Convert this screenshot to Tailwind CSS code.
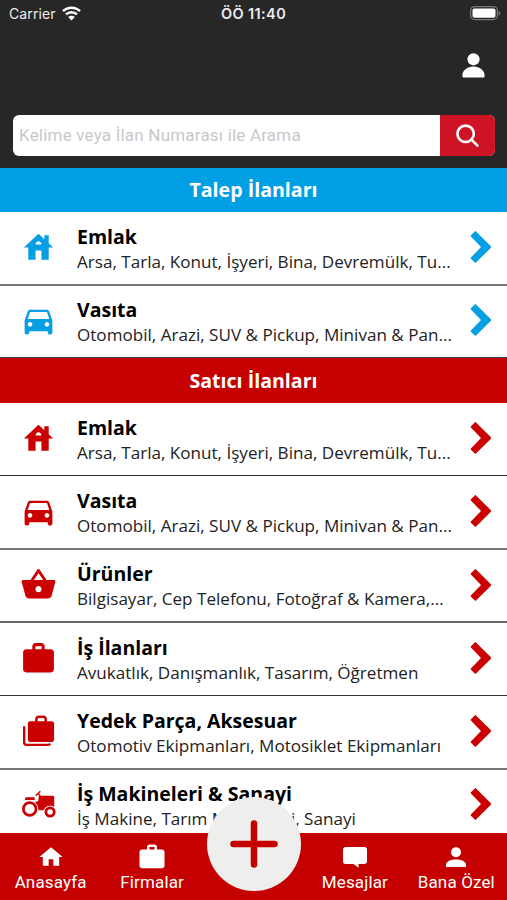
<!DOCTYPE html>
<html lang="tr">
<head>
    <meta charset="UTF-8" />
    <meta name="viewport" content="width=device-width, initial-scale=1.0" />
    <title>Anasayfa</title>
    <script src="https://cdn.jsdelivr.net/npm/@tailwindcss/browser@4"></script>
</head>
<body class="bg-white font-['Open_Sans',sans-serif] text-black">
    <!-- icon sprite -->
    <svg class="hidden">
        <symbol id="house" viewBox="0 0 24 24" preserveAspectRatio="none"><path d="M19 9.3V4h-3v2.6L12 3 2 12h3v8h5v-6h4v6h5v-8h3l-3-2.7zm-9 .7c0-1.1.9-2 2-2s2 .9 2 2h-4z"/></symbol>
        <symbol id="car" viewBox="0 0 24 24"><path d="M18.92 6.01C18.72 5.42 18.16 5 17.5 5h-11c-.66 0-1.21.42-1.42 1.01L3 12v8c0 .55.45 1 1 1h1c.55 0 1-.45 1-1v-1h12v1c0 .55.45 1 1 1h1c.55 0 1-.45 1-1v-8l-2.08-5.99zM6.5 16c-.83 0-1.5-.67-1.5-1.5S5.67 13 6.5 13s1.5.67 1.5 1.5S7.33 16 6.5 16zm11 0c-.83 0-1.5-.67-1.5-1.5s.67-1.5 1.5-1.5 1.5.67 1.5 1.5-.67 1.5-1.5 1.5zM5 11l1.5-4.5h11L19 11H5z"/></symbol>
        <symbol id="basket" viewBox="0 0 24 24"><path d="M17.21 9l-4.38-6.56c-.19-.28-.51-.42-.83-.42-.32 0-.64.14-.83.43L6.79 9H2c-.55 0-1 .45-1 1 0 .09.01.18.04.27l2.54 9.27c.23.84 1 1.46 1.92 1.46h13c.92 0 1.69-.62 1.93-1.46l2.54-9.27L23 10c0-.55-.45-1-1-1h-4.79zM9 9l3-4.4L15 9H9zm3 8c-1.1 0-2-.9-2-2s.9-2 2-2 2 .9 2 2-.9 2-2 2z"/></symbol>
        <symbol id="work" viewBox="0 0 24 24"><path d="M20 6h-4V4c0-1.11-.89-2-2-2h-4c-1.11 0-2 .89-2 2v2H4c-1.11 0-1.99.89-1.99 2L2 19c0 1.11.89 2 2 2h16c1.11 0 2-.89 2-2V8c0-1.11-.89-2-2-2zm-6 0h-4V4h4v2z"/></symbol>
        <symbol id="bags" viewBox="0 0 24 24">
            <path d="M2.700 8.600v10.600c0 1 .6 1.500 1.500 1.500h13.500c.9 0 1.500-.3 1.900-.9" fill="none" stroke="currentColor" stroke-width="1.500"/>
            <path d="M20.500 5.400h-3V4.200c0-1.400-1-2.500-2.400-2.500h-2.800c-1.400 0-2.500 1.100-2.500 2.500v1.200H6.600c-.9 0-1.500.6-1.500 1.500v10.300c0 .9.6 1.600 1.500 1.600h13.900c.9 0 1.600-.7 1.600-1.600V6.900c0-.9-.7-1.500-1.600-1.500zm-4.600 0h-4.500V4.400c0-.7.4-1.100 1-1.100h2.500c.6 0 1 .4 1 1.100v1z"/>
        </symbol>
        <symbol id="tractor" viewBox="0 0 24 24">
            <path d="M4 6.700h5.500v1.700H3.200c0-1 .3-1.700.8-1.700z"/>
            <circle cx="6.300" cy="14.300" r="4.100" fill="none" stroke="currentColor" stroke-width="1.800"/>
            <circle cx="19.500" cy="16.200" r="2.700" fill="none" stroke="currentColor" stroke-width="1.800"/>
            <path d="M10.200 5.700l3-3M11.800 4.100l1.600 2.200" fill="none" stroke="currentColor" stroke-width=".9"/>
            <path d="M12.200 5.700h9c.6 0 1 .4 1 1v6.200c-.8-.6-1.700-.8-2.700-.8-2 0-3.500 1.200-4.200 3h-3.400c.1-2.300-.8-4-2.300-5.200L11.900 9z"/>
        </symbol>
        <symbol id="chevron" viewBox="0 0 22 34"><path d="M6 1.400L20.700 16.100c.5.500.5 1.300 0 1.800L6 32.600c-.4.400-.8.400-1.200 0L.9 28.800c-.4-.4-.4-.8 0-1.200L11 17 .9 6.400c-.4-.4-.4-.8 0-1.200l3.900-3.800c.4-.4.8-.4 1.200 0z"/></symbol>
    </svg>

    <div class="relative flex h-[900px] w-[507px] flex-col overflow-hidden">
        <header class="h-[168px] shrink-0 bg-[#272727] text-white">
            <div class="flex h-[27px] items-center font-['Inter',sans-serif] text-[#ececec]">
                <div class="flex flex-1 items-center gap-[6px] pl-[9px]">
                    <span class="text-[14px] tracking-[0.1px]">Carrier</span>
                    <svg class="h-[15px] w-[19px]" viewBox="0 0 19 15" fill="none" stroke="#fff" stroke-width="2.500">
                        <path d="M1 5.200c4.700-4.700 12.300-4.700 17 0M4 8.400c3-3 8-3 11 0"/>
                        <path d="M6.200 11.100c1.800-1.800 4.800-1.800 6.600 0L9.500 14.500z" fill="#fff" stroke="none"/>
                    </svg>
                </div>
                <span class="mr-[3px] text-[14.500px] font-semibold tracking-[0.4px]">ÖÖ 11:40</span>
                <div class="flex flex-1 justify-end pr-[6px]">
                    <svg class="h-[15px] w-[31px]" viewBox="0 0 31 15">
                        <rect x=".6" y=".6" width="26.800" height="13" rx="4" fill="none" stroke="#777" stroke-width="1.200"/>
                        <rect x="2.500" y="2.500" width="23" height="9.200" rx="2" fill="#fff"/>
                        <path d="M28.600 5v4.400c1-.3 1.700-1.100 1.700-2.200S29.600 5.300 28.600 5z" fill="#777"/>
                    </svg>
                </div>
            </div>
            <div class="flex h-[88px] justify-end pt-[26px] pr-[22px]">
                <svg class="h-[25px] w-[23px]" viewBox="0 0 23 25" fill="#fff"><circle cx="11.500" cy="6.300" r="6.100"/><path d="M.3 22.800C.3 17.500 5.300 13.500 11.500 13.500s11.200 4 11.200 9.300c0 1.200-.6 1.800-1.700 1.800H2c-1.100 0-1.700-.6-1.700-1.800z"/></svg>
            </div>
            <div class="mx-[12.5px] flex h-[41px] overflow-hidden rounded-[6px] bg-white">
                <div class="flex flex-1 items-center pt-px pl-[6.500px] font-['Roboto',sans-serif] text-[17px] tracking-[0.2px] text-[#c8c8c8]"><span class="whitespace-nowrap">Kelime veya İlan Numarası ile Arama</span></div>
                <div class="flex w-[55px] items-center justify-center bg-[#ce1424]">
                    <svg class="h-6 w-6" viewBox="0 0 24 24" fill="none" stroke="#fff" stroke-width="2.600" stroke-linecap="round"><circle cx="10.600" cy="9.800" r="8.200"/><path d="M16.400 15.600l6 6"/></svg>
                </div>
            </div>
        </header>

        <h2 class="flex h-11 shrink-0 items-center justify-center bg-[#009fe3] text-[19.6px] font-bold text-white">Talep İlanları</h2>
        <div class="flex h-[74px] shrink-0 items-center border-b-2 border-[#777] pl-[21px] text-[#069fe3]">
            <svg class="mr-[21px] mb-px h-[37px] w-[35px] fill-current"><use href="#house"/></svg>
            <div class="flex-1 pt-px whitespace-nowrap text-black">
                <h3 class="text-[19.5px] leading-[25px] font-bold">Emlak</h3>
                <p class="text-[17.08px] leading-[25px] text-[#222]">Arsa, Tarla, Konut, İşyeri, Bina, Devremülk, Tu...</p>
            </div>
            <svg class="mr-[15px] mb-0.5 h-[34px] w-[22px] fill-current"><use href="#chevron"/></svg>
        </div>
        <div class="flex h-[72px] shrink-0 items-center border-b border-[#444] pl-5 text-[#069fe3]">
            <svg class="mr-5 mb-0.5 h-[37px] w-[37px] fill-current"><use href="#car"/></svg>
            <div class="flex-1 pt-px whitespace-nowrap text-black">
                <h3 class="text-[19.5px] leading-[25px] font-bold">Vasıta</h3>
                <p class="text-[17.08px] leading-[25px] text-[#222]">Otomobil, Arazi, SUV &amp; Pickup, Minivan &amp; Pan...</p>
            </div>
            <svg class="mr-[15px] mb-[3px] h-[34px] w-[22px] fill-current"><use href="#chevron"/></svg>
        </div>

        <h2 class="flex h-[45px] shrink-0 items-center justify-center bg-[#c60000] text-[19.6px] font-bold text-white">Satıcı İlanları</h2>
        <div class="flex h-[73px] shrink-0 items-center border-b border-[#333] pl-[21px] text-[#cb0000]">
            <svg class="mr-[21px] mb-0.5 h-[37px] w-[35px] fill-current"><use href="#house"/></svg>
            <div class="flex-1 pt-px whitespace-nowrap text-black">
                <h3 class="text-[19.5px] leading-[25px] font-bold">Emlak</h3>
                <p class="text-[17.08px] leading-[25px] text-[#222]">Arsa, Tarla, Konut, İşyeri, Bina, Devremülk, Tu...</p>
            </div>
            <svg class="mr-[15px] mb-0.5 h-[34px] w-[22px] fill-current"><use href="#chevron"/></svg>
        </div>
        <div class="flex h-[74px] shrink-0 items-center border-b-2 border-[#777] pl-5 text-[#cb0000]">
            <svg class="mr-5 mb-0.5 h-[37px] w-[37px] fill-current"><use href="#car"/></svg>
            <div class="flex-1 pt-px whitespace-nowrap text-black">
                <h3 class="text-[19.5px] leading-[25px] font-bold">Vasıta</h3>
                <p class="text-[17.08px] leading-[25px] text-[#222]">Otomobil, Arazi, SUV &amp; Pickup, Minivan &amp; Pan...</p>
            </div>
            <svg class="mr-[15px] mb-0.5 h-[34px] w-[22px] fill-current"><use href="#chevron"/></svg>
        </div>
        <div class="flex h-[73px] shrink-0 items-center border-b-2 border-[#666] pl-5 text-[#cb0000]">
            <svg class="mr-5 mb-0.5 h-[37px] w-[37px] fill-current"><use href="#basket"/></svg>
            <div class="flex-1 pt-px whitespace-nowrap text-black">
                <h3 class="text-[19.5px] leading-[25px] font-bold">Ürünler</h3>
                <p class="text-[17.08px] leading-[25px] text-[#222]">Bilgisayar, Cep Telefonu, Fotoğraf &amp; Kamera,...</p>
            </div>
            <svg class="mr-[15px] mb-0.5 h-[34px] w-[22px] fill-current"><use href="#chevron"/></svg>
        </div>
        <div class="flex h-[73px] shrink-0 items-center border-b border-[#333] pl-5 text-[#cb0000]">
            <svg class="mr-5 mb-0.5 h-[37px] w-[37px] fill-current"><use href="#work"/></svg>
            <div class="flex-1 pt-px whitespace-nowrap text-black">
                <h3 class="text-[19.5px] leading-[25px] font-bold">İş İlanları</h3>
                <p class="text-[17.08px] leading-[25px] text-[#222]">Avukatlık, Danışmanlık, Tasarım, Öğretmen</p>
            </div>
            <svg class="mr-[15px] mb-0.5 h-[34px] w-[22px] fill-current"><use href="#chevron"/></svg>
        </div>
        <div class="flex h-[74px] shrink-0 items-center border-b-2 border-[#777] pl-5 text-[#cb0000]">
            <svg class="mr-5 mb-px h-[37px] w-[37px] fill-current"><use href="#bags"/></svg>
            <div class="flex-1 pt-px whitespace-nowrap text-black">
                <h3 class="text-[19.5px] leading-[25px] font-bold">Yedek Parça, Aksesuar</h3>
                <p class="text-[17.08px] leading-[25px] text-[#222]">Otomotiv Ekipmanları, Motosiklet Ekipmanları</p>
            </div>
            <svg class="mr-[15px] mb-0.5 h-[34px] w-[22px] fill-current"><use href="#chevron"/></svg>
        </div>
        <div class="flex h-[70px] shrink-0 items-center pl-5 text-[#cb0000]">
            <svg class="mr-5 h-[37px] w-[37px] fill-current"><use href="#tractor"/></svg>
            <div class="flex-1 pt-px whitespace-nowrap text-black">
                <h3 class="text-[19.5px] leading-[25px] font-bold">İş Makineleri &amp; Sanayi</h3>
                <p class="text-[17.08px] leading-[25px] text-[#222]">İş Makine, Tarım Makineleri, Sanayi</p>
            </div>
            <svg class="mr-[15px] mb-0.5 h-[34px] w-[22px] fill-current"><use href="#chevron"/></svg>
        </div>

        <!-- tab bar sits over the list -->
        <nav class="absolute inset-x-0 bottom-0 grid h-[67px] grid-cols-5 bg-[#c40000] font-['Roboto',sans-serif] text-[17px] tracking-[0.15px] whitespace-nowrap text-white">
            <div class="flex flex-col items-center pt-[11px]">
                <svg class="h-[26px] w-[28px]" viewBox="0 0 24 24" preserveAspectRatio="none" fill="#fff"><path d="M10 20v-6h4v6h5v-8h3L12 3 2 12h3v8z"/></svg>
                <span class="leading-[25px]">Anasayfa</span>
            </div>
            <div class="flex flex-col items-center pt-[9px]">
                <svg class="h-[30px] w-[30px]" viewBox="0 0 24 24" fill="#fff"><use href="#work"/></svg>
                <span class="-mt-0.5 leading-[25px]">Firmalar</span>
            </div>
            <div></div>
            <div class="flex flex-col items-center pt-[14px]">
                <svg class="h-[21px] w-6" viewBox="0 0 24 21" fill="#fff"><path d="M2.500 0h19C23 0 24 1 24 2.500v12c0 1.500-1 2.500-2.500 2.500h-6v3.800L10.500 17h-8C1 17 0 16 0 14.500v-12C0 1 1 0 2.500 0z"/></svg>
                <span class="mt-[2px] leading-[25px]">Mesajlar</span>
            </div>
            <div class="flex flex-col items-center pt-[14px]">
                <svg class="h-[21px] w-5" viewBox="0 0 20 21" fill="#fff"><circle cx="10" cy="5.200" r="5"/><path d="M0 20v-2.200c0-3.400 5-5.300 10-5.300s10 1.900 10 5.300V20z"/></svg>
                <span class="mt-[2px] leading-[25px]">Bana Özel</span>
            </div>
        </nav>
        <div class="absolute top-[797px] left-[207px] flex h-[94px] w-[94px] items-center justify-center rounded-full bg-[#eeeeed]">
            <svg class="h-12 w-12" viewBox="0 0 48 48" fill="none" stroke="#c40000" stroke-width="6.500" stroke-linecap="round"><path d="M24 3.500v41M3.500 24h41"/></svg>
        </div>
    </div>
</body>
</html>
